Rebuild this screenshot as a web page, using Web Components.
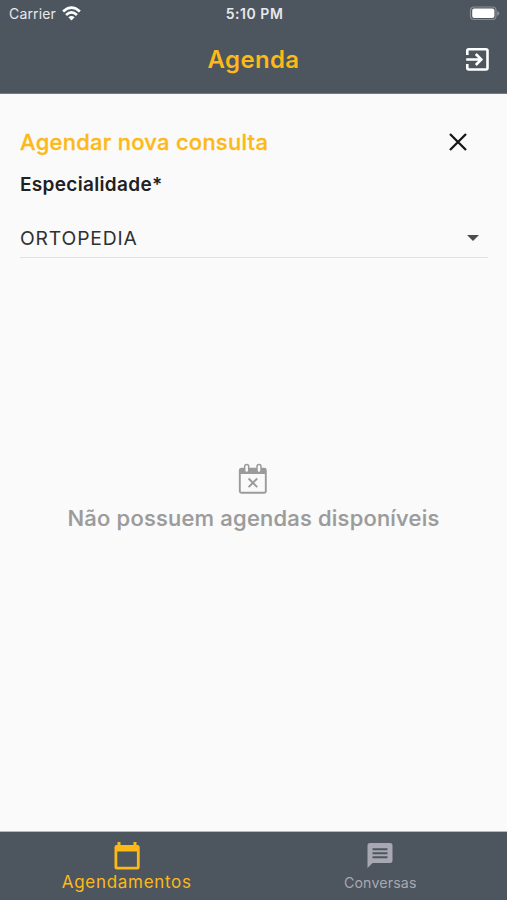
<!DOCTYPE html>
<html lang="pt-BR">
<head>
<meta charset="utf-8">
<title>Agenda</title>
<style>
html,body{margin:0;height:100%}
body{font-family:Inter,"Liberation Sans",sans-serif;background:#fafafa;--bar:#4d555f;--accent:#fcb917}
</style>
</head>
<body>
<agenda-app></agenda-app>
<script>
const define=(name,html)=>customElements.define(name,class extends HTMLElement{
  constructor(){super();this.attachShadow({mode:'open'}).innerHTML=html;}
});

define('status-bar',`<style>
:host{display:grid;grid-template-columns:1fr auto 1fr;align-items:center;height:27px;padding:0 7px 0 9px;color:#e6e9ed;font-size:14px;line-height:20px;box-sizing:border-box}
.l{display:flex;align-items:center;gap:6px}
.c{letter-spacing:.15px}
.t{font-weight:600;letter-spacing:.55px}
.r{display:flex;justify-content:flex-end}
svg{display:block}
</style>
<div class="l"><span class="c">Carrier</span><svg width="19" height="15" viewBox="0 0 19 15" fill="none" stroke="#fff" stroke-width="2.7"><path d="M1.1 5.5Q9.5-2.2 17.9 5.5M4.1 8.9Q9.5 4 14.9 8.9"/><path d="M6.4 11.2Q9.5 8.6 12.6 11.2L9.5 14.4Z" fill="#fff" stroke="none"/></svg></div>
<span class="t">5:10 PM</span>
<div class="r"><svg width="31" height="15" viewBox="0 0 31 15"><rect x="1.5" y="1" width="25.5" height="12.5" rx="3.5" fill="none" stroke="#89909a" stroke-width="1.2"/><rect x="3.2" y="2.6" width="22.2" height="9.4" rx="2" fill="#fff"/><path d="M28.2 5v4.8q2.2-1 2.2-2.4T28.2 5Z" fill="#89909a"/></svg></div>`);

define('app-header',`<style>
:host{display:grid;grid-template-columns:1fr auto 1fr;align-items:center;height:65px;padding:0 17px;box-sizing:border-box}
h1{margin:0;grid-column:2;font-size:24px;line-height:30px;font-weight:560;color:var(--accent);letter-spacing:.35px}
svg{justify-self:end;display:block}
</style>
<h1><slot></slot></h1>
<svg width="25" height="25" viewBox="0 0 25 25" fill="none" stroke="#fff" stroke-width="2.6"><path d="M2.3 8V3.8Q2.3 2.3 3.8 2.3H21Q22.5 2.3 22.5 3.8V21Q22.5 22.5 21 22.5H3.8Q2.3 22.5 2.3 21V17"/><path d="M1.2 12.5H16M10.8 7L16.3 12.5L10.8 18"/></svg>`);

define('consult-form',`<style>
:host{display:block;padding:33px 19px 0 20px}
.head{display:flex;justify-content:space-between;align-items:center;padding-right:20px;height:30px}
h2{margin:0;font-size:22px;line-height:30px;font-weight:500;letter-spacing:.25px;color:var(--accent);-webkit-text-stroke:.3px var(--accent)}
label{display:block;font-size:19px;line-height:26px;margin-top:15px;font-weight:600;letter-spacing:.32px;color:#212121}
.select{display:flex;justify-content:space-between;align-items:center;height:40px;margin-top:20px;padding-right:9px;border-bottom:1px solid #e2e2e2;font-size:19.3px;letter-spacing:.85px;color:#303030;box-sizing:border-box}
svg{display:block}
</style>
<div class="head"><h2>Agendar nova consulta</h2><svg width="20" height="20" viewBox="0 0 20 20" stroke="#161616" stroke-width="2.3"><path d="M2 2L18 18M18 2L2 18"/></svg></div>
<label>Especialidade*</label>
<div class="select"><span>ORTOPEDIA</span><svg width="12" height="6" viewBox="0 0 12 6"><path d="M0 0H12L6 6Z" fill="#4c4c4c"/></svg></div>`);

define('empty-state',`<style>
:host{display:flex;flex-direction:column;align-items:center;color:#9b9b9b}
p{margin:8px 0 0;font-size:22px;line-height:30px;font-weight:500;letter-spacing:.2px;white-space:nowrap;-webkit-text-stroke:.2px}
svg{display:block;margin-right:2px}
</style>
<svg width="30" height="32" viewBox="0 0 30 32"><path d="M2 5H28V11H2Z" fill="#9b9b9b"/><rect x="1.8" y="5.8" width="26" height="24" rx="1.8" fill="none" stroke="#9b9b9b" stroke-width="1.9"/><g fill="#fafafa" stroke="#9b9b9b" stroke-width="1.5"><rect x="6.7" y="1.6" width="4" height="7.8" rx="2"/><rect x="19" y="1.6" width="4" height="7.8" rx="2"/></g><path d="M10.6 15.5L19.2 24.1M19.2 15.5L10.6 24.1" stroke="#9b9b9b" stroke-width="2"/></svg>
<p><slot></slot></p>`);

define('tab-item',`<style>
:host{display:flex;flex:1;flex-direction:column;align-items:center;color:#a7a8b2;font-size:14.2px;letter-spacing:.15px}
:host([active]){color:var(--accent);font-size:17px;letter-spacing:.7px}
.i{height:41px;display:flex;align-items:flex-end}
.t{line-height:20px}
:host([active]) .t{margin-top:-1px}
::slotted(svg){display:block}
</style><div class="i"><slot name="icon"></slot></div><span class="t"><slot></slot></span>`);

define('tab-bar',`<style>:host{display:flex;height:69px;background:var(--bar);border-top:1px solid #b5b9be;box-sizing:border-box}svg{display:block}</style>
<tab-item active><svg slot="icon" width="27" height="31" viewBox="-.5 0 27 31"><path fill-rule="evenodd" fill="#fcb917" d="M4 0H7V3H20V0H23V3H24Q26.2 3 26.2 5.2V25.2Q26.2 27.5 24 27.5H3.2Q1 27.5 1 25.2V5.2Q1 3 3.2 3H4ZM3.8 9.5V24.7H23.4V9.5Z"/></svg>Agendamentos</tab-item>
<tab-item><svg slot="icon" width="26" height="30" viewBox="0 0 26 30"><path fill="#a7a8b2" d="M3 0H23Q25.5 0 25.5 2.5V17.5Q25.5 20 23 20H5.5L.5 25V2.5Q.5 0 3 0Z"/><path d="M5.5 6.2H20.5M5.5 10.2H20.5M5.5 14.2H20.5" stroke="#4d555f" stroke-width="2"/></svg>Conversas</tab-item>`);

define('agenda-app',`<style>
:host{display:flex;flex-direction:column;height:900px;background:#fafafa;overflow:hidden}
.top{background:var(--bar);height:94px;box-sizing:border-box;border-bottom:1px solid #747b82}
main{flex:1;display:flex;flex-direction:column}
empty-state{margin-top:205px}
</style>
<div class="top"><status-bar></status-bar><app-header>Agenda</app-header></div>
<main><consult-form></consult-form><empty-state>Não possuem agendas disponíveis</empty-state></main>
<tab-bar></tab-bar>`);
</script>
</body>
</html>
